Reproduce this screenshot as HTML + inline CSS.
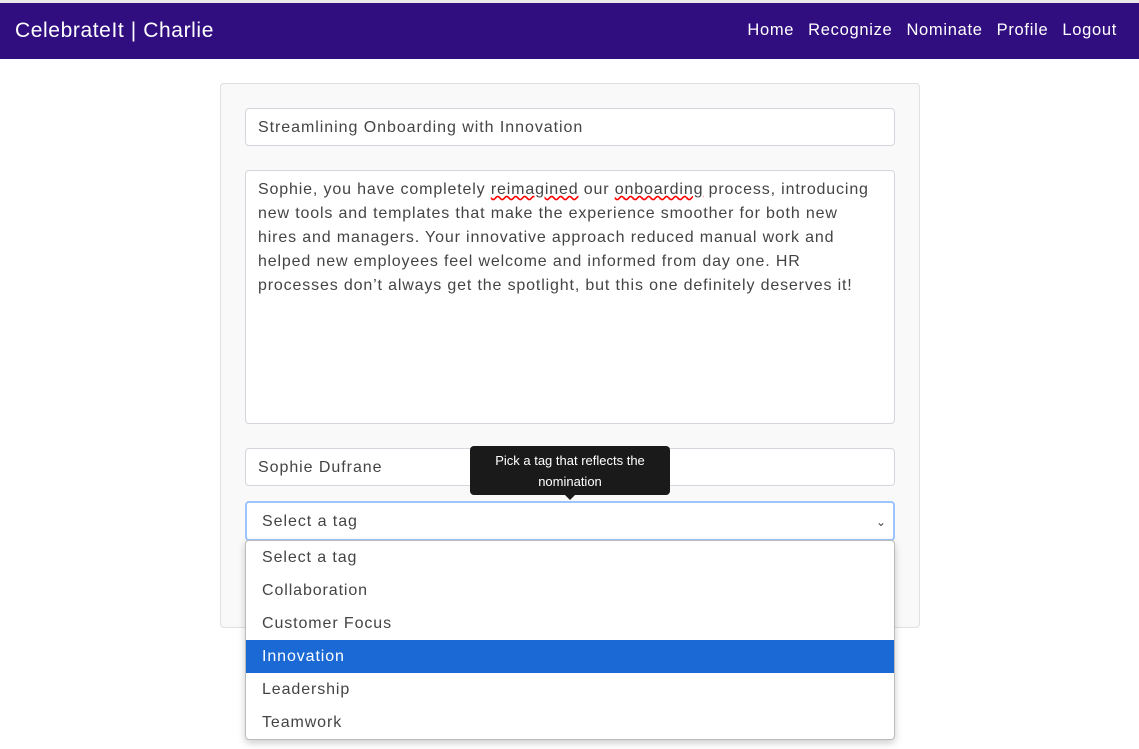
<!DOCTYPE html>
<html><head><style>
*{box-sizing:border-box;margin:0;padding:0}
body{width:1139px;height:749px;overflow:hidden;background:#fff;font-family:"Liberation Sans",sans-serif;color:#444;position:relative}
.nav{position:absolute;top:3px;left:0;width:1139px;height:56px;background:#310e80;color:#fff}
.brand{position:absolute;left:15px;top:16px;font-size:21px;letter-spacing:.6px}
.links{position:absolute;right:22px;top:18px;font-size:16.5px;letter-spacing:.7px}
.links span{margin-left:14px}
.card{position:absolute;left:220px;top:83px;width:700px;height:545px;background:#f9f9f9;border:1px solid #e0e0e0;border-radius:4px}
.in{position:absolute;left:245px;width:650px;background:#fff;border:1px solid #d5d5dd;border-radius:4px;font-size:16px;padding:0 12px;color:#444;letter-spacing:.95px;white-space:nowrap}
.tip{position:absolute;left:470px;top:446px;width:200px;height:49px;background:#1a1a1a;color:#fff;border-radius:4px;font-size:13px;text-align:center;line-height:21px;padding-top:4px}
.tip:after{content:"";position:absolute;left:94px;bottom:-5px;border:6px solid transparent;border-top-color:#1a1a1a;border-bottom:0}
.dd{position:absolute;left:245px;top:540px;width:650px;height:200px;background:#fff;border:1px solid #bbb;border-radius:4px;box-shadow:0 3px 8px rgba(0,0,0,.2);font-size:16px;letter-spacing:.9px}
.dd div{height:33px;line-height:33px;padding-left:16px;color:#444}
.dd .sel{background:#1a69d4;color:#fff}
</style></head><body>
<div style="position:absolute;top:0;left:0;width:1139px;height:3px;background:#e8e8e8"></div>
<div class="nav"><div class="brand">CelebrateIt | Charlie</div>
<div class="links"><span>Home</span><span>Recognize</span><span>Nominate</span><span>Profile</span><span>Logout</span></div></div>
<div class="card"></div>
<div class="in" style="top:108px;height:38px;line-height:38px">Streamlining Onboarding with Innovation</div>
<div class="in" style="top:170px;height:254px;padding-top:7px;line-height:24px;letter-spacing:.85px">Sophie, you have completely <span style="text-decoration:underline wavy red">reimagined</span> our <span style="text-decoration:underline wavy red">onboarding</span> process, introducing<br>new tools and templates that make the experience smoother for both new<br>hires and managers. Your innovative approach reduced manual work and<br>helped new employees feel welcome and informed from day one. HR<br>processes don’t always get the spotlight, but this one definitely deserves it!</div>
<div class="in" style="top:448px;height:38px;line-height:38px">Sophie Dufrane</div>
<div class="in" style="top:501px;height:40px;line-height:38px;border:2px solid #9ec5fe;padding-left:15px">Select a tag<span style="position:absolute;right:6px;top:0;font-size:12px">&#8964;</span></div>
<div class="tip">Pick a tag that reflects the<br>nomination</div>
<div class="dd"><div>Select a tag</div><div>Collaboration</div><div>Customer Focus</div><div class="sel">Innovation</div><div>Leadership</div><div>Teamwork</div></div>
</body></html>
